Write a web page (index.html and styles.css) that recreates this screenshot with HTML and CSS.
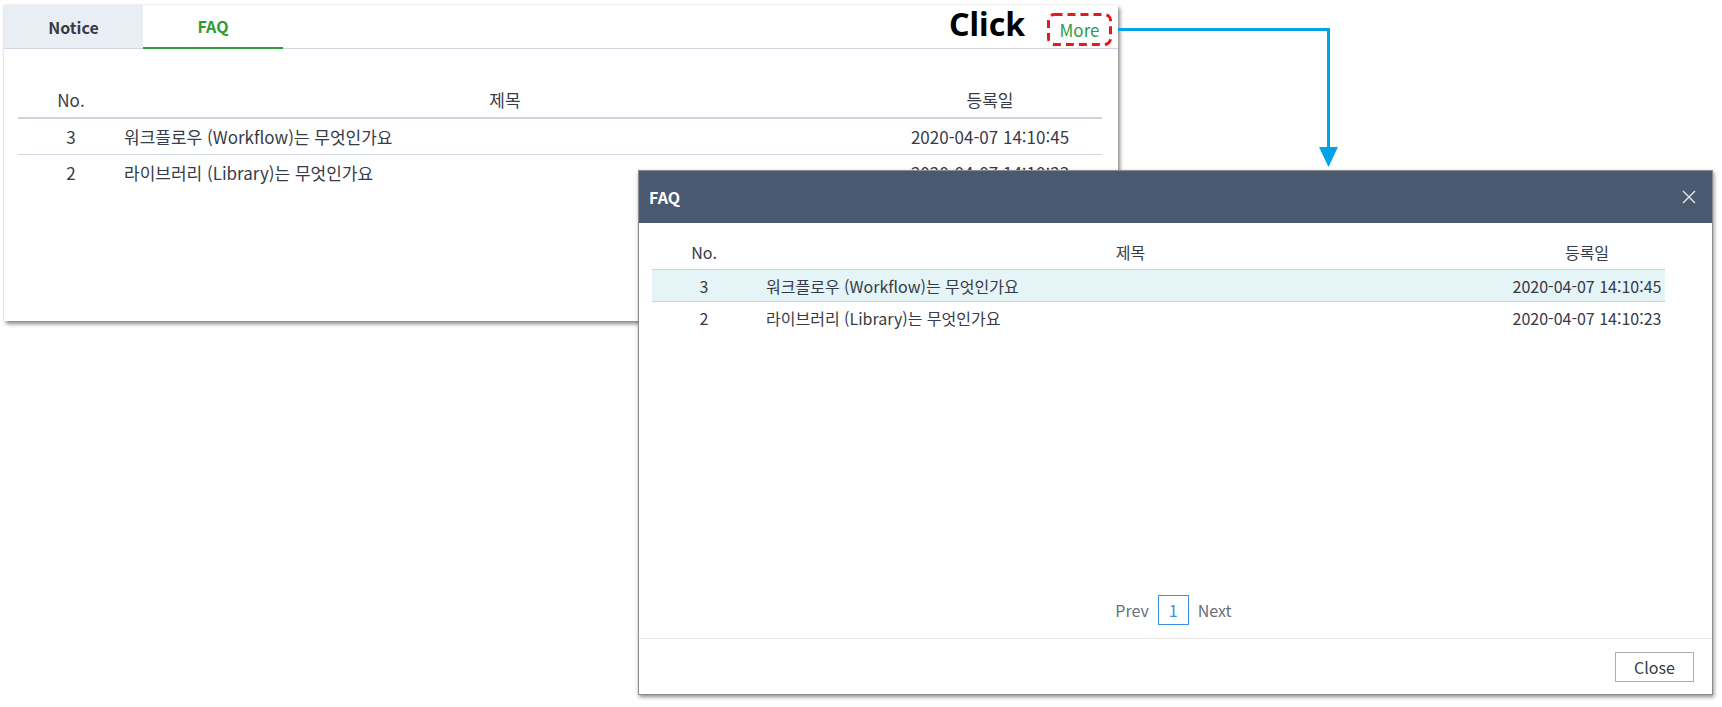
FILE: index.html
```html
<!DOCTYPE html>
<html lang="ko">
<head>
<meta charset="utf-8">
<title>FAQ</title>
<link rel="stylesheet" href="styles.css">
</head>
<body>
<div class="stage">
  <section class="widget">
    <div class="tabbar">
      <div class="tab">Notice</div>
      <div class="tab active">FAQ</div>
      <div class="tab-spacer"></div>
      <div class="click-label">Click</div>
      <a class="more">More
        <svg class="more-outline" width="65" height="33" viewBox="0 0 65 33">
          <rect x="1.5" y="1.5" width="62" height="30" rx="6" ry="6" fill="none" stroke="#e8191c" stroke-width="3" stroke-dasharray="8 5"/>
        </svg>
      </a>
    </div>
    <div class="wtable">
      <div class="wrow whead">
        <div class="c-no">No.</div>
        <div class="c-title head-title">제목</div>
        <div class="c-date">등록일</div>
      </div>
      <div class="wrow">
        <div class="c-no">3</div>
        <div class="c-title">워크플로우 (Workflow)는 무엇인가요</div>
        <div class="c-date">2020-04-07 14:10:45</div>
      </div>
      <div class="wrow">
        <div class="c-no">2</div>
        <div class="c-title">라이브러리 (Library)는 무엇인가요</div>
        <div class="c-date">2020-04-07 14:10:23</div>
      </div>
    </div>
  </section>

  <svg class="arrow" width="240" height="170" viewBox="0 0 240 170">
    <polyline points="0,29.5 210.5,29.5 210.5,152" fill="none" stroke="#00a3e8" stroke-width="3"/>
    <polygon points="201,147 220,147 210.5,167" fill="#00a3e8"/>
  </svg>

  <div class="modal">
    <div class="modal-head">
      <div class="modal-title">FAQ</div>
      <svg class="modal-x" width="14" height="14" viewBox="0 0 14 14">
        <path d="M1 1 L13 13 M13 1 L1 13" stroke="#e6e9ee" stroke-width="1.4" fill="none"/>
      </svg>
    </div>
    <div class="modal-body">
      <div class="mtable">
        <div class="mrow mhead">
          <div class="m-no">No.</div>
          <div class="m-title head-title">제목</div>
          <div class="m-date">등록일</div>
        </div>
        <div class="mrow selected">
          <div class="m-no">3</div>
          <div class="m-title">워크플로우 (Workflow)는 무엇인가요</div>
          <div class="m-date">2020-04-07 14:10:45</div>
        </div>
        <div class="mrow">
          <div class="m-no">2</div>
          <div class="m-title">라이브러리 (Library)는 무엇인가요</div>
          <div class="m-date">2020-04-07 14:10:23</div>
        </div>
      </div>
      <div class="pager">
        <span class="pg-link">Prev</span>
        <span class="pg-num">1</span>
        <span class="pg-link">Next</span>
      </div>
    </div>
    <div class="modal-foot">
      <button class="btn-close">Close</button>
    </div>
  </div>
</div>
</body>
</html>
```

FILE: styles.css
```css
* { box-sizing: border-box; }
html, body { margin: 0; padding: 0; background: #fff; }
body {
  font-family: "Noto Sans CJK KR", "Noto Sans", sans-serif;
  color: #363b47;
  width: 1722px;
  height: 707px;
  overflow: hidden;
}
.stage {
  position: relative;
  width: 1722px;
  height: 707px;
  padding: 5px 0 0 4px;
}

/* ---------- widget ---------- */
.widget {
  width: 1114px;
  height: 316px;
  background: #fff;
  box-shadow: 0 0 2px rgba(0,0,0,0.12), 2px 3px 4px rgba(0,0,0,0.45);
}
.tabbar {
  display: flex;
  align-items: stretch;
  height: 44px;
  border-bottom: 1px solid #d0d7e3;
}
.tab {
  width: 139px;
  display: flex;
  align-items: center;
  justify-content: center;
  font-size: 16px;
  font-weight: 700;
  color: #363b47;
  background: #e9eef4;
}
.tab.active {
  width: 140px;
  background: #fff;
  color: #2e9a2e;
  border-bottom: 2px solid #2e9a3a;
  margin-bottom: -1px;
}
.tab-spacer { flex: 1; }
.click-label {
  display: flex;
  align-items: center;
  font-family: "Noto Sans", sans-serif;
  font-size: 32px;
  font-weight: 700;
  color: #000;
  padding-bottom: 6px;
  margin-right: 22px;
}
.more {
  position: relative;
  align-self: flex-start;
  margin-top: 8px;
  margin-right: 6px;
  width: 65px;
  height: 33px;
  display: flex;
  align-items: center;
  justify-content: center;
  font-size: 17px;
  color: #2f9a46;
  text-decoration: none;
}
.more-outline {
  position: absolute;
  left: 0;
  top: 0;
}

.wtable {
  margin: 36px 16px 0 14px;
}
.wrow {
  display: flex;
  align-items: center;
  height: 36px;
  font-size: 17px;
  border-bottom: 1px solid #cdd5e1;
}
.wrow:last-child { border-bottom: none; height: 34px; }
.wrow.whead { height: 34px; padding-bottom: 3px; border-bottom: 2px solid #cdd5e1; }
.c-no { width: 106px; text-align: center; }
.c-title { flex: 1; padding-left: 0; }
.c-date { width: 216px; text-align: center; padding-right: 8px; }
.head-title { text-align: center; }

/* ---------- arrow annotation ---------- */
.arrow {
  position: absolute;
  left: 1118px;
  top: 0;
  overflow: visible;
}

/* ---------- modal ---------- */
.modal {
  position: absolute;
  left: 638px;
  top: 170px;
  width: 1075px;
  height: 525px;
  background: #fff;
  border: 1px solid #8d8d8d;
  box-shadow: 1px 2px 4px rgba(0,0,0,0.45);
  display: flex;
  flex-direction: column;
}
.modal-head {
  height: 52px;
  background: #4a5970;
  display: flex;
  align-items: center;
  justify-content: space-between;
  padding: 0 16px 0 10px;
}
.modal-title {
  color: #fff;
  font-size: 16px;
  font-weight: 700;
}
.modal-body {
  flex: 1;
  display: flex;
  flex-direction: column;
  padding: 12px 47px 0 13px;
}
.mtable { flex: 1; }
.mrow {
  display: flex;
  align-items: center;
  height: 32px;
  font-size: 16px;
}
.mrow.mhead {
  height: 35px;
  border-bottom: 1px solid #c5d0e0;
}
.mrow.selected {
  background: #e5f4f6;
  border-bottom: 1px solid #c5d0e0;
}
.m-no { width: 104px; text-align: center; }
.m-title { flex: 1; padding-left: 10px; }
.m-date { width: 170px; text-align: center; padding-left: 14px; }

.pager {
  height: 56px;
  display: flex;
  align-items: center;
  justify-content: center;
  gap: 9px;
  font-size: 16px;
  margin-left: 30px;
}
.pg-link { color: #6a6f7a; }
.pg-num {
  width: 31px;
  height: 30px;
  border: 1px solid #3d8fe6;
  color: #3d8fe6;
  display: flex;
  align-items: center;
  justify-content: center;
}
.modal-foot {
  height: 56px;
  border-top: 1px solid #e6e6e6;
  display: flex;
  align-items: center;
  justify-content: flex-end;
  padding-right: 18px;
}
.btn-close {
  width: 79px;
  height: 30px;
  background: #fff;
  border: 1px solid #a9adb5;
  font-family: "Noto Sans CJK KR", sans-serif;
  font-size: 16px;
  color: #363b47;
  margin-top: 1px;
}
```
